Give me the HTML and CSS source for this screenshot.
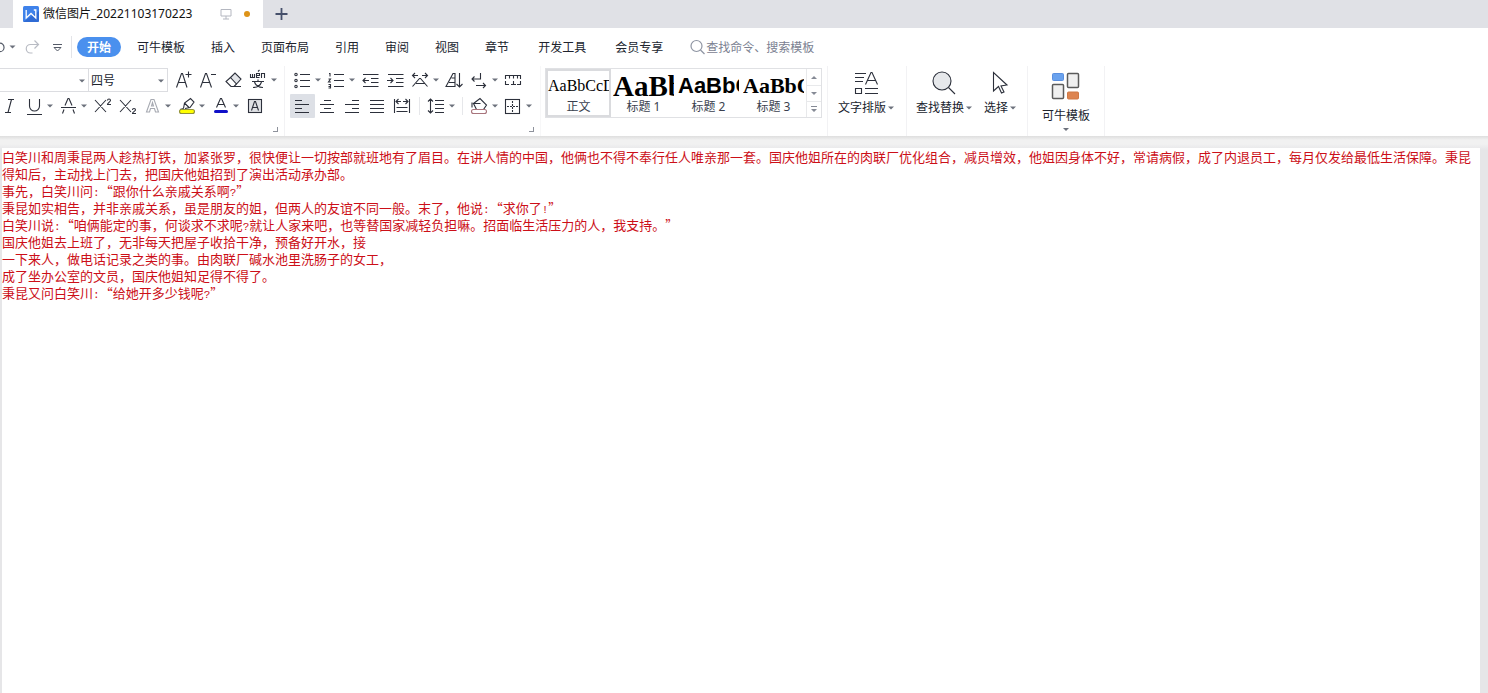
FILE: index.html
```html
<!DOCTYPE html>
<html lang="zh-CN">
<head>
<meta charset="utf-8">
<title>微信图片_20221103170223</title>
<link rel="stylesheet" href="styles.css">
</head>
<body>
<svg width="0" height="0" class="defs" aria-hidden="true">
  <symbol id="caret" viewBox="0 0 9 24"><path d="M0 10.500h6L3 13.500z" fill="#6c717c"/></symbol>
</svg>

<header class="tabstrip">
  <div class="doc-tab">
    <svg class="wlogo" viewBox="0 0 16 16"><rect width="16" height="16" rx="1.500" fill="#3f82ea"/><path d="M0 16L16 5v9.500a1.500 1.500 0 0 1-1.500 1.500z" fill="#2f6bd4"/><path d="M3.200 4v8L8 7.500l4.800 4.500V4h-2" fill="none" stroke="#fff" stroke-width="1.300"/></svg>
    <span class="doc-name">微信图片_20221103170223</span>
    <svg class="monitor" viewBox="0 0 12 12"><path d="M1 1.500h10v6.500H1zM6 8v3M3 11h6" fill="none" stroke="#b4b7c0"/></svg>
    <span class="dirty"></span>
  </div>
  <button class="new-tab" aria-label="新建"><svg viewBox="0 0 13 13"><path d="M6.500 0v12M.5 6h12" fill="none" stroke="#46506b" stroke-width="1.800"/></svg></button>
</header>

<nav class="menu">
  <div class="quick">
    <button aria-label="撤销"><svg width="18" height="20" viewBox="0 0 18 20"><path d="M-2 6.200h2a4 4.200 0 0 1 0 8.500h-2" fill="none" stroke="#555b68" stroke-width="1.200"/><path d="M9.500 8.500h6l-3 3z" fill="#6c717c"/></svg></button>
    <button aria-label="恢复"><svg width="26" height="20" viewBox="0 0 26 20"><path d="M20 7.500h-7.500a4 4 0 0 0 0 8.500h2M16.500 3.500l4 4-4 4" fill="none" stroke="#b9bcc4" stroke-width="1.200"/></svg></button>
    <button aria-label="自定义"><svg width="27" height="20" viewBox="0 0 27 20"><path d="M9 7.500h9M10 10.500h7l-3.500 3.500z" fill="none" stroke="#555b68"/></svg></button>
  </div>
  <button class="tab active">开始</button>
  <button class="tab">可牛模板</button>
  <button class="tab">插入</button>
  <button class="tab">页面布局</button>
  <button class="tab">引用</button>
  <button class="tab">审阅</button>
  <button class="tab">视图</button>
  <button class="tab">章节</button>
  <button class="tab wide">开发工具</button>
  <button class="tab wide">会员专享</button>
  <label class="search"><svg viewBox="0 0 16 16"><circle cx="6.500" cy="7" r="5.500" fill="none" stroke="#8f95a3" stroke-width="1.200"/><path d="M10.500 11l4 4" stroke="#8f95a3" stroke-width="1.200"/></svg><input type="text" placeholder="查找命令、搜索模板" aria-label="查找命令、搜索模板"></label>
</nav>

<section class="ribbon">
  <div class="group font-group">
    <div class="row">
      <div class="combo name"><input type="text" aria-label="字体"><svg class="caret"><use href="#caret"/></svg></div>
      <div class="combo size"><select aria-label="字号"><option>四号</option></select><svg class="caret"><use href="#caret"/></svg></div>
      <button class="tool" aria-label="增大字号"><svg class="ico" viewBox="0 0 25 24"><path d="M5.500 19.500l5-14h1l4.500 14M7.500 14.500h7M14.500 6.500h6M17.500 3.500v6"/></svg></button>
      <button class="tool" aria-label="减小字号"><svg class="ico" viewBox="0 0 25 24"><path d="M4.500 19.500l5-14h1l5 14M6.500 14.500h7M15 6.500h5"/></svg></button>
      <button class="tool" aria-label="清除格式"><svg class="ico" viewBox="0 0 25 24"><path d="M9.500 9.500l4.500-4.500 6 6-4.500 5z" fill="#e2e4e8"/><path d="M9.500 9.500L5 13.500l5 5h3l2.500-2.500M11 18.500h9"/></svg></button>
      <button class="tool split" aria-label="拼音指南"><svg class="ico" viewBox="0 0 25 24"><path d="M4.500 6v3.500h4V6M6.500 6v3.500M10.500 7.500h3v-2h-3v4h3M12 3.500l1.500-1.500M15.500 10V5.500h3V10M6 13.500h12M12 11.500v2M8.500 14c1 3 4 5.500 8.500 5.500M15.500 14c-1 3-4 5.500-8.500 5.500"/></svg><svg class="caret"><use href="#caret"/></svg></button>
    </div>
    <div class="row">
      <button class="tool italic" aria-label="倾斜"><svg class="ico" viewBox="0 0 25 24"><path d="M8 5.500h6M5 18.500h6M11.500 5.500l-3.500 13"/></svg></button>
      <button class="tool split" aria-label="下划线"><svg class="ico" viewBox="0 0 25 24"><path d="M7.500 5v7a5 5 0 0 0 10 0V5M5 20.500h15"/></svg><svg class="caret"><use href="#caret"/></svg></button>
      <button class="tool split" aria-label="删除线"><svg class="ico" viewBox="0 0 25 24"><path d="M5 13.500h15M9 11.500l3-7h1l3 7M8 15.500l-1.500 4M17 15.500l1.500 4"/></svg><svg class="caret"><use href="#caret"/></svg></button>
      <button class="tool" aria-label="上标"><svg class="ico" viewBox="0 0 25 24"><path d="M5 6l11 12M16 6L5 18M17.500 6.500c0-2 3-2 3 0 0 1-3 2.500-3 4h3.500"/></svg></button>
      <button class="tool" aria-label="下标"><svg class="ico" viewBox="0 0 25 24"><path d="M5 6l11 12M16 6L5 18M17.500 16c0-2 3-2 3 0 0 1-3 2-3 3.500h3.500"/></svg></button>
      <button class="tool split" aria-label="文字效果"><svg class="ico" viewBox="0 0 25 24"><path class="faint" d="M6.500 18L11 5.500h3L18.500 18h-3l-1-3.500h-4l-1 3.500zM11.500 12l1-3.500 1 3.500z"/></svg><svg class="caret"><use href="#caret"/></svg></button>
      <button class="tool split" aria-label="突出显示"><svg class="ico" viewBox="0 0 25 24"><path d="M9.500 14.500l1-5.500 6-4.500 3.500 3.500-4 5.500-5 1M10.500 9l4.500 4.500M9.500 14.500l-3.500 1"/><rect x="5.500" y="15.500" width="15" height="4" rx="2" fill="#ffff00" stroke="#92923a"/></svg><svg class="caret"><use href="#caret"/></svg></button>
      <button class="tool split" aria-label="字体颜色"><svg class="ico" viewBox="0 0 25 24"><path d="M8.500 13.500l4-9h1l4 9M9.500 10.500h7"/><rect x="6" y="16" width="14" height="3" rx="1.500" fill="#1010c8" stroke="none"/></svg><svg class="caret"><use href="#caret"/></svg></button>
      <button class="tool" aria-label="字符底纹"><svg class="ico" viewBox="0 0 25 24"><rect x="6.500" y="5.500" width="13" height="13" fill="#dfe1e5"/><path d="M9.500 16.500l3-9h1l3 9M10.500 13.500h5"/></svg></button>
    </div>
    <button class="launcher" aria-label="字体设置"></button>
  </div>

  <div class="group para-group">
    <div class="row">
      <button class="tool split" aria-label="项目符号"><svg class="ico" viewBox="0 0 25 24"><path d="M10 6.500h10M10 12.500h10M10 18.500h10"/><circle cx="6" cy="6.500" r="1.200"/><circle cx="6" cy="12.500" r="1.200"/><circle cx="6" cy="18.500" r="1.200"/></svg><svg class="caret"><use href="#caret"/></svg></button>
      <button class="tool split" aria-label="编号"><svg class="ico" viewBox="0 0 25 24"><path d="M10 6.500h10M10 12.500h10M10 18.500h10M5 5.500h1v3M4.500 11h2l-2 3h2.500M4.500 16.500h2v3.500h-2M4.500 18.500h2"/></svg><svg class="caret"><use href="#caret"/></svg></button>
      <button class="tool" aria-label="减少缩进"><svg class="ico" viewBox="0 0 25 24"><path d="M5 6.500h15.500M13 10.500h7.500M13 14.500h7.500M5 18.500h15.500M11 12.500H5M7.500 10L5 12.500 7.500 15"/></svg></button>
      <button class="tool" aria-label="增加缩进"><svg class="ico" viewBox="0 0 25 24"><path d="M5 6.500h15.500M13 10.500h7.500M13 14.500h7.500M5 18.500h15.500M4 12.500h6M7.500 10l2.500 2.500L7.500 15"/></svg></button>
      <button class="tool split" aria-label="中文版式"><svg class="ico" viewBox="0 0 25 24"><path d="M4.500 7.500H10M7 5L4.500 7.500 7 10M14 7.500h5.500M17 5l2.500 2.500L17 10M4.500 18.500l7-8h1l7 8M8 15.500h8.500"/></svg><svg class="caret"><use href="#caret"/></svg></button>
      <button class="tool" aria-label="排序"><svg class="ico" viewBox="0 0 25 24"><path d="M4 18.500l7-13h2v13zM7 14.500h6M9.500 10h3.500M17.500 5v14M14.500 16l3 3 3-3"/></svg></button>
      <button class="tool split" aria-label="换行"><svg class="ico" viewBox="0 0 25 24"><path d="M13.500 5v6H5M7.500 8.500L5 11l2.500 2.500M9 17.500h9.500M16 15l2.500 2.500L16 20"/></svg><svg class="caret"><use href="#caret"/></svg></button>
      <button class="tool" aria-label="制表位"><svg class="ico" viewBox="0 0 25 24"><path d="M4.500 11V7.500h15V11M8.500 8v2.500M12.500 8v2.500M16.500 8v2.500M4.500 13v3.500H8M16 16.500h3.500V13M10 16.500h5M12.500 13v3.500"/></svg></button>
    </div>
    <div class="row">
      <button class="tool selected" aria-label="左对齐"><svg class="ico" viewBox="0 0 25 24"><path d="M5 6.500h7M5 10.500h14M5 14.500h7M5 18.500h14"/></svg></button>
      <button class="tool" aria-label="居中"><svg class="ico" viewBox="0 0 25 24"><path d="M9 6.500h7M5 10.500h14M9 14.500h7M5 18.500h14"/></svg></button>
      <button class="tool" aria-label="右对齐"><svg class="ico" viewBox="0 0 25 24"><path d="M12 6.500h7M5 10.500h14M12 14.500h7M5 18.500h14"/></svg></button>
      <button class="tool" aria-label="两端对齐"><svg class="ico" viewBox="0 0 25 24"><path d="M5 6.500h14M5 10.500h14M5 14.500h14M5 18.500h14"/></svg></button>
      <button class="tool" aria-label="分散对齐"><svg class="ico" viewBox="0 0 25 24"><path d="M4.500 5v14M19.500 5v14M6.500 13.500h11M6.500 17.500h11M6 7.500h5M8.500 5L6 7.500 8.500 10M13 7.500h5M15.500 5L18 7.500 15.500 10"/></svg></button>
      <span class="rule"></span>
      <button class="tool split" aria-label="行距"><svg class="ico" viewBox="0 0 25 24"><path d="M11 6.500h9M11 10.500h9M11 14.500h9M11 18.500h9M6.500 5v14M4 7.500L6.500 5 9 7.500M4 16.500L6.500 19 9 16.500"/></svg><svg class="caret"><use href="#caret"/></svg></button>
      <span class="rule"></span>
      <button class="tool split" aria-label="底纹颜色"><svg class="ico" viewBox="0 0 25 24"><path d="M6.500 9.500l6.500-5 6.500 6.500-3 4.500H9.500L6.500 9.500h7M5 8.500v5"/><rect class="swatch" x="4.500" y="15.500" width="15" height="4" rx="2"/></svg><svg class="caret"><use href="#caret"/></svg></button>
      <button class="tool split" aria-label="边框"><svg class="ico" viewBox="0 0 25 24"><rect x="4.500" y="5.500" width="14" height="14"/><path d="M11.500 7v11M6 12.500h11" stroke-dasharray="2 1"/></svg><svg class="caret"><use href="#caret"/></svg></button>
    </div>
    <button class="launcher" aria-label="段落设置"></button>
  </div>

  <div class="group style-group">
    <div class="gallery">
      <button class="style chosen"><span class="sample s0">AaBbCcDd</span><span>正文</span></button>
      <button class="style"><span class="sample s1">AaBb</span><span>标题 1</span></button>
      <button class="style"><span class="sample s2">AaBbC</span><span>标题 2</span></button>
      <button class="style"><span class="sample s3">AaBbC</span><span>标题 3</span></button>
      <div class="scroller">
        <button aria-label="上一行"><svg viewBox="0 0 7 7"><path d="M0 5h6L3 2z"/></svg></button>
        <button aria-label="下一行"><svg viewBox="0 0 7 7"><path d="M0 2h6L3 5z"/></svg></button>
        <button aria-label="更多样式"><svg viewBox="0 0 7 7"><path d="M0 0h6v1H0zM0 3h6L3 6z"/></svg></button>
      </div>
    </div>
  </div>

  <div class="group big-group">
    <button class="big"><svg class="bigico" viewBox="0 0 28 28"><path d="M3 4.500h11M3 8.500h9M3 12.500h8M13.500 15.500l5.500-12h1l5.500 12M15.500 11.500h8M3.500 19.500h6v5h-6zM13 19.500h13M13 24.500h13"/></svg><span class="cap">文字排版<svg class="caret"><use href="#caret"/></svg></span></button>
  </div>
  <div class="group big-group pair">
    <button class="big"><svg class="bigico" viewBox="0 0 28 28"><circle cx="12" cy="12" r="9" fill="#e6e8eb"/><path d="M18.500 18.500l6.500 6.500"/></svg><span class="cap">查找替换<svg class="caret"><use href="#caret"/></svg></span></button>
    <button class="big"><svg class="bigico" viewBox="0 0 28 28"><path d="M7.500 3.500v18.500l5-4.500 3 6.500 2.500-1-3-6 6-1z"/></svg><span class="cap">选择<svg class="caret"><use href="#caret"/></svg></span></button>
  </div>
  <div class="group big-group">
    <button class="big tpl"><svg class="tplico" viewBox="0 0 30 30"><rect x="1.500" y="1.500" width="11" height="7" rx="1" fill="#6aa2ee" stroke="#5a8fdf"/><rect x="16.500" y="1.500" width="11" height="14" rx="1" fill="#f0f0f0" stroke="#5b5b5b" stroke-width="1.500"/><rect x="1.500" y="12.500" width="11" height="14" rx="1" fill="#f0f0f0" stroke="#5b5b5b" stroke-width="1.500"/><rect x="16.500" y="20" width="11" height="7" rx="1" fill="#dd8450" stroke="#cf7845"/></svg><span class="cap">可牛模板</span><svg class="drop" viewBox="0 0 6 3"><path d="M0 0h6L3 3z" fill="#6c717c"/></svg></button>
  </div>
</section>

<main class="workspace">
  <article class="page">
    <p>白笑川和周秉昆两人趁热打铁，加紧张罗，很快便让一切按部就班地有了眉目。在讲人情的中国，他俩也不得不奉行任人唯亲那一套。国庆他姐所在的肉联厂优化组合，减员增效，他姐因身体不好，常请病假，成了内退员工，每月仅发给最低生活保障。秉昆得知后，主动找上门去，把国庆他姐招到了演出活动承办部。</p>
    <p>事先，白笑川问<span class="half">:</span>“跟你什么亲戚关系啊<span class="half">?</span>”</p>
    <p>秉昆如实相告，并非亲戚关系，虽是朋友的姐，但两人的友谊不同一般。末了，他说<span class="half">:</span>“求你了<span class="half">!</span>”</p>
    <p>白笑川说<span class="half">:</span>“咱俩能定的事，何谈求不求呢<span class="half">?</span>就让人家来吧，也等替国家减轻负担嘛。招面临生活压力的人，我支持。”</p>
    <p>国庆他姐去上班了，无非每天把屋子收拾干净，预备好开水，接</p>
    <p>一下来人，做电话记录之类的事。由肉联厂碱水池里洗肠子的女工，</p>
    <p>成了坐办公室的文员，国庆他姐知足得不得了。</p>
    <p>秉昆又问白笑川<span class="half">:</span>“给她开多少钱呢<span class="half">?</span>”</p>
  </article>
</main>
</body>
</html>
```
FILE: styles.css
```css
* { box-sizing: border-box; }
body {
  margin: 0;
  min-height: 100vh;
  display: flex;
  flex-direction: column;
  background: #fff;
  color: #20242e;
  font: 12px/16px "Noto Sans", "Noto Sans CJK SC", sans-serif;
}
button, input, select {
  font: inherit;
  color: inherit;
  border: 0;
  padding: 0;
  margin: 0;
  background: none;
  border-radius: 0;
  outline: 0;
}
button { white-space: nowrap; }
svg { display: block; flex: none; }
.defs { position: absolute; }

/* title tabs */
.tabstrip { display: flex; height: 28px; background: #e0e1e6; padding-left: 13px; }
.doc-tab { display: flex; align-items: center; width: 250px; padding: 0 10px; background: #fff; }
.wlogo { width: 16px; height: 16px; }
.doc-name { margin-left: 4px; color: #111; white-space: nowrap; }
.monitor { width: 12px; height: 12px; margin-left: auto; }
.dirty { width: 6px; height: 6px; border-radius: 50%; background: #dd9318; margin: 0 3px 0 12px; }
.new-tab { width: 36px; display: flex; align-items: center; justify-content: center; }
.new-tab svg { width: 13px; height: 13px; }

/* menu */
.menu { display: flex; align-items: center; height: 38px; }
.quick { display: flex; height: 22px; align-items: center; border-right: 1px solid #e3e4e8; margin-right: 5px; }
.tab { padding: 2px 13px 0; height: 20px; }
.tab.active { padding: 1px 10px 0; margin-right: 3px; border-radius: 10px; background: #4a90ee; color: #fff; font-weight: 700; }
.tab.wide { margin-left: 3px; }
.search { display: flex; align-items: center; margin-left: 14px; }
.search svg { width: 16px; height: 16px; }
.search input { width: 120px; height: 20px; }
.search input::placeholder { color: #7b8191; opacity: 1; }

/* ribbon */
.ribbon { display: flex; height: 70px; }
.group { display: flex; flex-direction: column; gap: 2px; padding-top: 2px; border-right: 1px solid #f2f2f4; }
.font-group { width: 285px; }
.para-group { width: 256px; padding-left: 5px; border-right-color: #f7f7f8; }
.row { display: flex; height: 24px; align-items: center; }
.combo { display: flex; height: 24px; border: 1px solid #dcdde1; border-left: 0; }
.combo input, .combo select { flex: 1; min-width: 0; appearance: none; padding: 1px 0 0 2px; }
.combo .caret { height: 24px; }
.combo.name { width: 89px; }
.combo.size { width: 79px; margin-right: 3px; }
.tool { display: flex; width: 25px; height: 24px; }
.tool.split { width: 34px; }
.tool.italic { width: 22px; }
.tool.selected { background: #dde0e6; border-radius: 1px; }
.caret { width: 9px; height: 24px; }
.ico { width: 25px; height: 24px; }
.ico, .bigico { fill: none; stroke: #2c303b; stroke-width: 1.1; }
.faint { stroke: #a7aab2; }
.swatch { fill: #fff; stroke: #a8747c; }
.rule { width: 1px; height: 18px; margin: 0 4px; background: #e6e7ea; }
.launcher { width: 5px; height: 5px; margin: 7px 6px 0 auto; border: solid #8e929c; border-width: 0 1px 1px 0; }

/* style gallery */
.style-group { padding: 2px 5px 0 4px; }
.gallery { display: flex; height: 50px; border: 1px solid #e0e1e4; }
.style { width: 65px; display: flex; flex-direction: column; align-items: center; padding: 2px; color: #3a3f4e; }
.style.chosen { border: 2px solid #dadbde; padding: 0; }
.sample { width: 100%; height: 29px; line-height: 30px; overflow: hidden; text-align: left; color: #000; }
.s0 { font-family: "Liberation Serif", serif; font-size: 16px; }
.s1 { font-family: "Liberation Serif", serif; font-size: 29px; font-weight: 700; }
.s2 { font-family: "Liberation Sans", sans-serif; font-size: 22px; font-weight: 700; }
.s3 { font-family: "Liberation Serif", serif; font-size: 22px; font-weight: 700; }
.scroller { width: 15px; display: grid; grid-template-rows: 1fr 1fr 1fr; border-left: 1px solid #e8e9eb; }
.scroller button { display: flex; align-items: center; justify-content: center; }
.scroller button + button { border-top: 1px solid #e8e9eb; }
.scroller svg { width: 7px; height: 7px; fill: #858a95; }

/* large buttons */
.big-group { flex-direction: row; gap: 9px; padding: 2px 9px 0 10px; }
.big-group.pair { padding: 2px 8px 0 9px; }
.big { display: flex; flex-direction: column; align-items: center; }
.bigico { width: 28px; height: 28px; margin: 1px 4px 3px 0; }
.cap { display: flex; align-items: center; height: 16px; gap: 2px; }
.big.tpl { padding: 0 5px 0 4px; }
.tplico { width: 30px; height: 30px; margin: 4px 0 6px; }
.drop { width: 6px; height: 3px; margin-top: 4px; }

/* document */
.workspace { flex: 1; display: flex; padding: 12px 8px 0 2px; background: linear-gradient(#dedede, #f1f1f1 4px, #f1f1f1 8px, #e6e6e8 14px); }
.page {
  flex: 1;
  background: #fff;
  color: #cc0f18;
  font: 13px/17px "Noto Sans CJK SC", sans-serif;
  text-spacing-trim: space-all;
}
.page p { margin: 0; height: auto; }
.half { font: 11px/1 "Liberation Mono", monospace; }
```
